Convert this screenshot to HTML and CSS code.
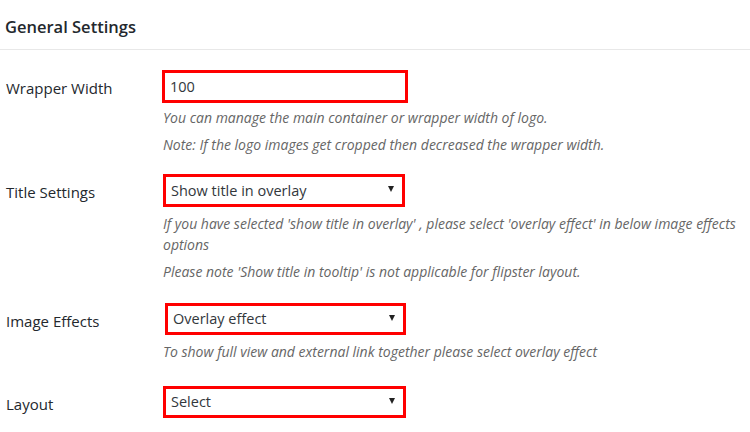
FILE: index.html
```html
<!DOCTYPE html>
<html>
<head>
<meta charset="utf-8">
<link rel="stylesheet" href="styles.css">
</head>
<body>
<div class="page">
  <h2 class="title">General Settings</h2>
  <div class="rows">
    <div class="row row-1">
      <div class="label">Wrapper Width</div>
      <div class="field">
        <div class="box box-1"><span class="val">100</span></div>
        <p class="desc d-first">You can manage the main container or wrapper width of logo.</p>
        <p class="desc">Note: If the logo images get cropped then decreased the wrapper width.</p>
      </div>
    </div>
    <div class="row row-2">
      <div class="label">Title Settings</div>
      <div class="field">
        <div class="box box-2 sel"><span class="val">Show title in overlay</span><span class="arrow"></span></div>
        <p class="desc d-first">If you have selected 'show title in overlay' , please select 'overlay effect' in below image effects options</p>
        <p class="desc">Please note 'Show title in tooltip' is not applicable for flipster layout.</p>
      </div>
    </div>
    <div class="row row-3">
      <div class="label">Image Effects</div>
      <div class="field">
        <div class="box box-3 sel"><span class="val">Overlay effect</span><span class="arrow"></span></div>
        <p class="desc d-first">To show full view and external link together please select overlay effect</p>
      </div>
    </div>
    <div class="row row-4">
      <div class="label">Layout</div>
      <div class="field">
        <div class="box box-4 sel"><span class="val">Select</span><span class="arrow"></span></div>
      </div>
    </div>
  </div>
</div>
</body>
</html>
```
FILE: styles.css
```css
html, body {
  margin: 0;
  padding: 0;
  background: #ffffff;
}
body {
  font-family: "Open Sans", "Noto Sans", sans-serif;
  color: #23282d;
  width: 750px;
  height: 432px;
  overflow: hidden;
}
.title {
  margin: 0;
  padding: 16px 0 0 5px;
  height: 33px;
  font-size: 16.5px;
  font-weight: 600;
  line-height: 22px;
  color: #23282d;
  border-bottom: 1px solid #e8e8e8;
}
.rows {
  display: flex;
  flex-direction: column;
}
.row {
  display: flex;
}
.row-1 { margin-top: 20px; }
.row-2 { margin-top: 19px; }
.row-3 { margin-top: 21px; }
.row-4 { margin-top: 24px; }
.label {
  width: 157px;
  padding-left: 6px;
  font-size: 15px;
  line-height: 20px;
  padding-top: 8px;
  color: #23282d;
  flex: none;
}
.field {
  flex: 1;
  display: flex;
  flex-direction: column;
  padding-right: 8px;
}
.box {
  box-sizing: border-box;
  height: 33px;
  border: 3px solid #ff0000;
  display: flex;
  align-items: center;
  padding: 0 8px 0 5px;
  font-size: 14.5px;
  color: #32373c;
}
.box-1 { width: 246px; margin-left: -1px; }
.box-2 { width: 242px; }
.box-3 { width: 241px; margin-left: 2px; height: 32px; }
.box-4 { width: 243px; height: 32px; }
.val {
  flex: 1;
  line-height: 20px;
}
.arrow {
  width: 0;
  height: 0;
  border-left: 3.5px solid transparent;
  border-right: 3.5px solid transparent;
  border-top: 6px solid #222;
  margin-top: -3px;
  flex: none;
}
.desc {
  margin: 6px 0 0 0;
  font-size: 14px;
  line-height: 21px;
  font-style: italic;
  color: #666666;
}
.desc.d-first {
  margin-top: 6px;
}
.row-1 .desc.d-first {
  margin-top: 4px;
}
```
